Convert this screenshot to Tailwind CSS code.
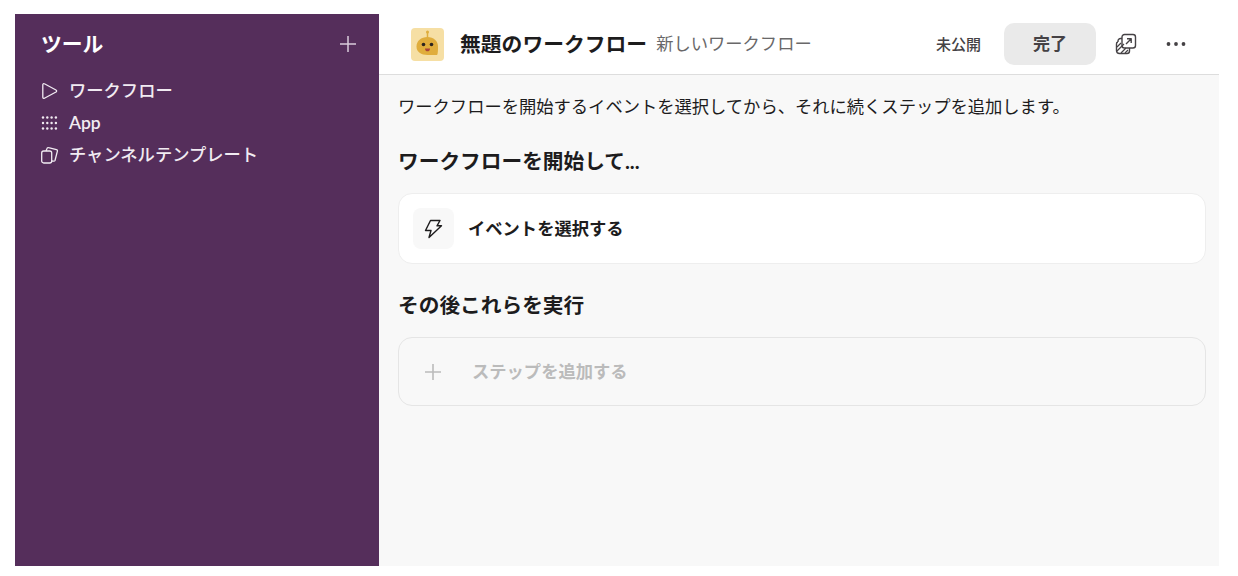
<!DOCTYPE html>
<html lang="ja">
<head>
  <meta charset="UTF-8">
  <title>無題のワークフロー</title>
  <script src="https://cdn.jsdelivr.net/npm/@tailwindcss/browser@4"></script>
</head>
<body class="bg-white font-['Lato','Noto_Sans_CJK_JP',sans-serif] text-[#1d1c1d] h-[576px] w-[1238px] overflow-hidden pt-[14px] pl-[15px] pr-[19px] pb-[10px]">
  <div class="flex h-full">

    <!-- sidebar -->
    <aside class="w-[364px] shrink-0 bg-[#552e5b] text-white">
      <div class="flex items-center justify-between h-[60px] pl-[26px] pr-[21px]">
        <h1 class="text-[20.800px] font-bold">ツール</h1>
        <svg class="w-[20px] h-[20px] text-[#d9cbdb]" viewBox="0 0 20 20" fill="none" stroke="currentColor" stroke-width="1.500"><path d="M10 2v16M2 10h16"/></svg>
      </div>
      <ul class="mt-[1px] text-[17.300px] font-medium text-[#f1ebf2]">
        <li class="flex items-center h-[32px] pl-[26px] gap-[10px]">
          <svg class="w-[18px] h-[18px]" viewBox="0 0 18 18" fill="none" stroke="currentColor" stroke-width="1.300" stroke-linejoin="round"><path d="M1.800 2.800c0-.9.9-1.400 1.600-1L15 8c.8.4.8 1.500 0 2L3.400 16.200c-.7.400-1.600-.1-1.600-1z"/></svg>
          <span>ワークフロー</span>
        </li>
        <li class="flex items-center h-[32px] pl-[26px] gap-[10px]">
          <svg class="w-[18px] h-[18px]" viewBox="0 0 18 18" fill="currentColor"><circle cx="2" cy="3.500" r="1.200"/><circle cx="6.300" cy="3.500" r="1.200"/><circle cx="10.600" cy="3.500" r="1.200"/><circle cx="14.900" cy="3.500" r="1.200"/><circle cx="2" cy="9" r="1.200"/><circle cx="6.300" cy="9" r="1.200"/><circle cx="10.600" cy="9" r="1.200"/><circle cx="14.900" cy="9" r="1.200"/><circle cx="2" cy="14.500" r="1.200"/><circle cx="6.300" cy="14.500" r="1.200"/><circle cx="10.600" cy="14.500" r="1.200"/><circle cx="14.900" cy="14.500" r="1.200"/></svg>
          <span class="text-[17.500px] font-semibold">App</span>
        </li>
        <li class="flex items-center h-[32px] pl-[26px] gap-[10px]">
          <svg class="w-[18px] h-[18px]" viewBox="0 0 18 18" fill="none" stroke="currentColor" stroke-width="1.300" stroke-linejoin="round"><rect x="0.700" y="5" width="10" height="12" rx="2"/><path d="M5 5l1-2.500c.2-.7.900-1.100 1.600-.9l7.800 2c.8.2 1.200.9 1 1.600L14 14.500c-.2.700-1 .9-3 .5"/></svg>
          <span>チャンネルテンプレート</span>
        </li>
      </ul>
    </aside>

    <main class="flex-1 flex flex-col min-w-0">
      <!-- header -->
      <header class="h-[61px] shrink-0 bg-white border-b border-[#dddddd] flex items-center pl-[32px] pr-[32px]">
        <div class="w-[33px] h-[33px] rounded-[4px] bg-[#f6dfa4] flex items-center justify-center">
          <svg class="w-[33px] h-[33px]" viewBox="0 0 33 33"><path d="M16.500 4v6" stroke="#dfae3e" stroke-width="1.500"/><circle cx="16.500" cy="4" r="1.500" fill="#dfae3e"/><path d="M16.500 9c6 0 10.500 4 10.500 9.500 0 2 0 8-1 8.500H16.500c-6.500 0-11-3-11-8.500 0-5.500 4.500-9.500 11-9.500z" fill="#e0ad3c"/><circle cx="12.500" cy="16.500" r="1.800" fill="#2b2420"/><circle cx="20.500" cy="16.500" r="1.800" fill="#2b2420"/><path d="M14 20.500h5c0 2-1.200 2.800-2.500 2.800S14 22.500 14 20.500z" fill="#a8443a"/></svg>
        </div>
        <span class="ml-[16px] text-[20.800px] font-bold">無題のワークフロー</span>
        <span class="ml-[9px] text-[17.300px] text-[#696869]">新しいワークフロー</span>
        <span class="ml-auto text-[15px] font-medium text-[#454245]">未公開</span>
        <button class="ml-[23px] w-[92px] h-[42px] rounded-[10px] bg-[#eaeaea] text-[17px] font-bold text-[#454245]">完了</button>
        <svg class="ml-[19px] w-[22px] h-[22px] text-[#454245]" viewBox="0 0 22 22" fill="none" stroke="currentColor" stroke-width="1.400" stroke-linejoin="round"><rect x="7" y="1.500" width="13.500" height="13.500" rx="2.500"/><path d="M11 11l5-5M12 5.800h4.200V10"/><path d="M7 5.500H5.500A2.500 2.500 0 0 0 3 8v1M3 9H2.800A1.800 1.800 0 0 0 1.500 11v6.500A3 3 0 0 0 4.500 20.500H12a2.500 2.500 0 0 0 2.500-2.500v-3"/><path d="M2 14l4-4M2 18l7-7M6 20l5-5M10 20l3-3" stroke-width="1.200"/></svg>
        <svg class="ml-[28px] w-[22px] h-[22px] text-[#454245]" viewBox="0 0 22 22" fill="currentColor"><circle cx="3.500" cy="11" r="1.900"/><circle cx="11" cy="11" r="1.900"/><circle cx="18.500" cy="11" r="1.900"/></svg>
      </header>

      <!-- content -->
      <section class="flex-1 bg-[#f8f8f8] pl-[19px] pr-[13px]">
        <p class="mt-[20px] text-[17.300px] leading-[24px] text-[#1d1c1d]">ワークフローを開始するイベントを選択してから、それに続くステップを追加します。</p>

        <h2 class="mt-[28px] text-[20.700px] leading-[28px] font-bold">ワークフローを開始して...</h2>
        <div class="mt-[18px] h-[71px] bg-white border border-[#eeeeee] rounded-[14px] flex items-center pl-[14px]">
          <div class="w-[41px] h-[41px] rounded-[8px] bg-[#f8f8f8] flex items-center justify-center">
            <svg class="w-[20px] h-[20px] text-[#1d1c1d] -translate-x-[1px]" viewBox="0 0 20 20" fill="none" stroke="currentColor" stroke-width="1.400" stroke-linejoin="round" stroke-linecap="round"><path d="M7.500 1.500h9.500l-3 5.300H18.500L6 18.500l2-7H2.500z"/></svg>
          </div>
          <span class="ml-[14px] text-[17.300px] font-bold">イベントを選択する</span>
        </div>

        <h2 class="mt-[27px] text-[20.700px] leading-[28px] font-bold">その後これらを実行</h2>
        <div class="mt-[18px] h-[69px] border border-[#e5e5e5] rounded-[14px] flex items-center pl-[25px]">
          <svg class="w-[18px] h-[18px] text-[#bbbbbb]" viewBox="0 0 18 18" fill="none" stroke="currentColor" stroke-width="1.600"><path d="M9 1v16M1 9h16"/></svg>
          <span class="ml-[30px] text-[17.300px] font-bold text-[#bbbbbb]">ステップを追加する</span>
        </div>
      </section>
    </main>
  </div>
</body>
</html>
